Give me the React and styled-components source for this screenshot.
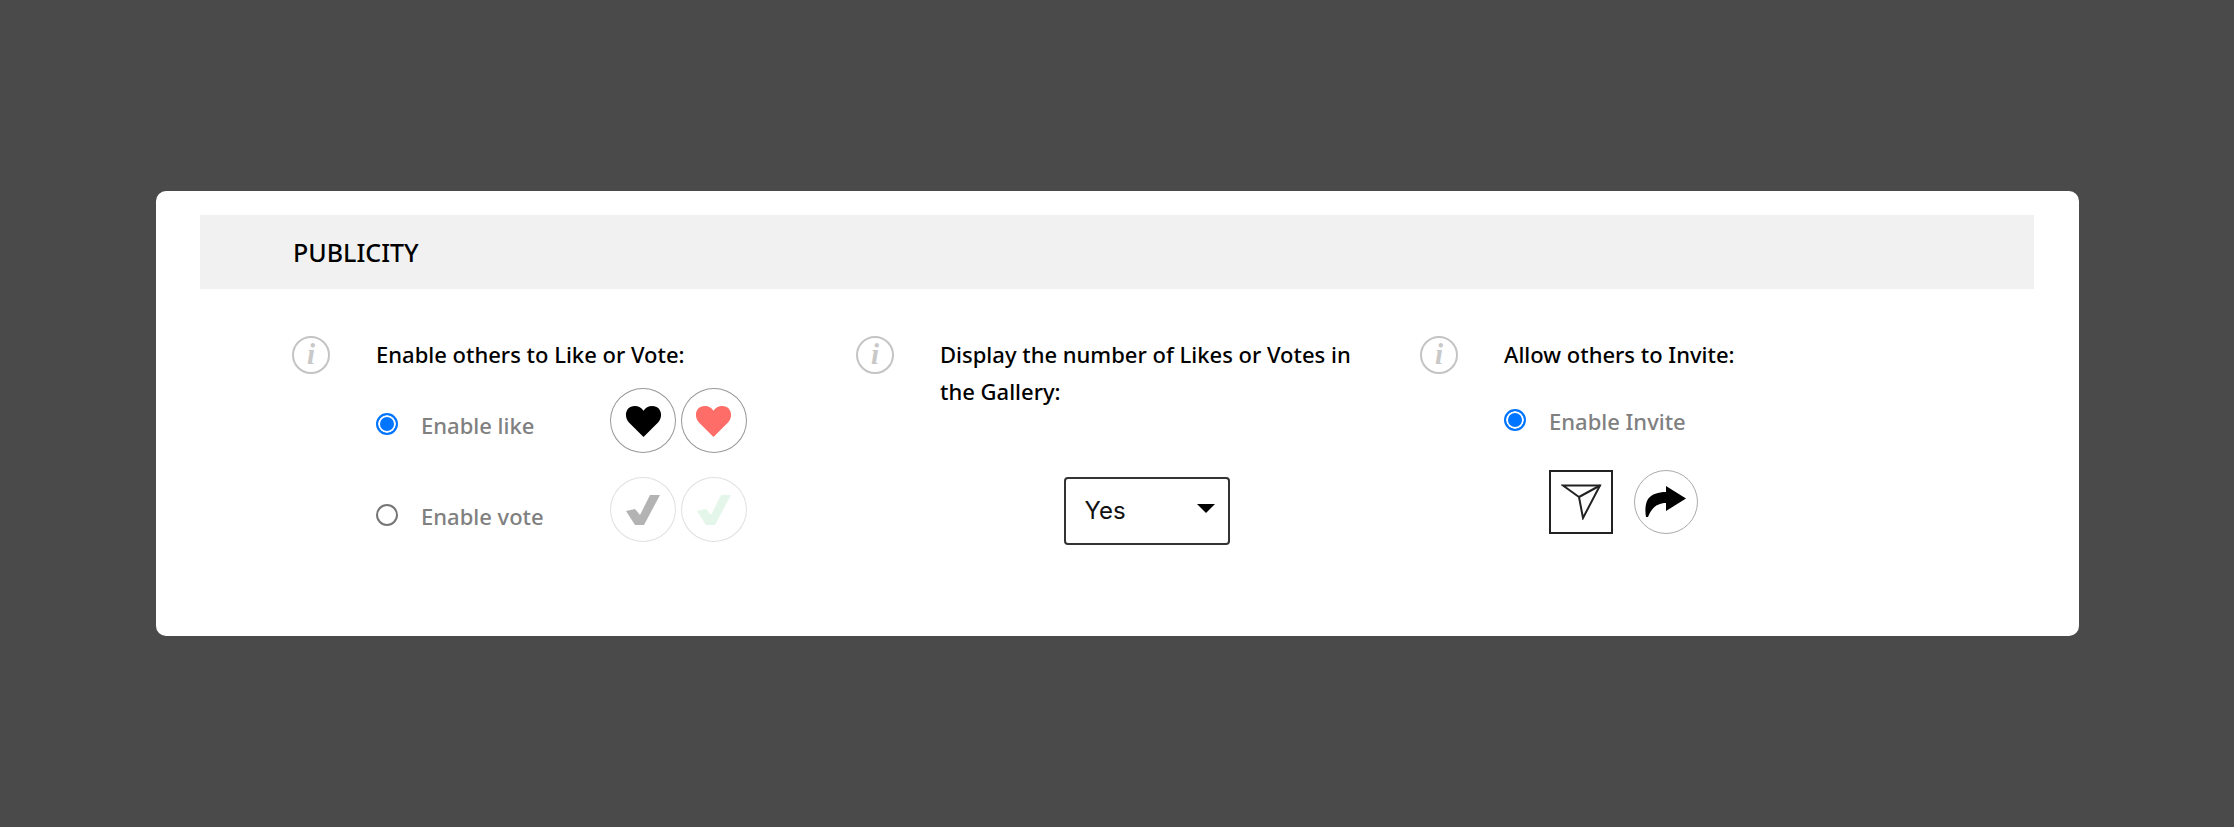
import React from "react";
import styled, { createGlobalStyle } from "styled-components";

const GlobalStyle = createGlobalStyle`
    html, body {
        margin: 0;
        height: 100%;
        background: #4a4a4a;
    }
    body {
        font-family: 'Noto Sans', 'Open Sans', sans-serif;
    }
`;

const Page = styled.div`
    padding: 191px 155px 0 155.5px;
    height: 827px;
    box-sizing: border-box;
`;

const Card = styled.section`
    box-sizing: border-box;
    width: 1923.5px;
    height: 445px;
    padding: 24px 45px 0 44.5px;
    background: #fff;
    border-radius: 10px;
`;

const SectionHeader = styled.h2`
    box-sizing: border-box;
    height: 74px;
    margin: 0;
    padding-left: 93px;
    background: #f1f1f1;
    color: #000;
    font-size: 25px;
    font-weight: 500;
    line-height: 74px;
`;

const Columns = styled.div`
    display: grid;
    grid-template-columns: repeat(3, 564px);
    padding: 47px 0 0 92px;
`;

const Column = styled.div`
    display: flex;
    align-items: flex-start;
`;

const InfoIcon = styled.span`
    flex: none;
    box-sizing: border-box;
    width: 38px;
    height: 38px;
    margin-right: 46px;
    border: 2px solid #c4c4c4;
    border-radius: 50%;
    color: #c8c8c8;
    font-family: 'Liberation Serif', serif;
    font-style: italic;
    font-weight: 700;
    font-size: 29px;
    line-height: 33px;
    text-align: center;
`;

const Content = styled.div`
    flex: 1;
    min-width: 0;
`;

const Title = styled.div`
    width: 425px;
    color: #000;
    font-size: 22px;
    font-weight: 500;
    line-height: 37px;
`;

const OptionRow = styled.div`
    display: flex;
    align-items: flex-start;
    margin-top: ${props => props.$top}px;
`;

const Choice = styled.label`
    display: flex;
    align-items: flex-start;
    width: 234px;
    padding-top: ${props => props.$offset}px;
`;

const Radio = styled.input.attrs({ type: "radio", readOnly: true })`
    appearance: none;
    flex: none;
    box-sizing: border-box;
    width: 22px;
    height: 22px;
    margin: 0 23px 0 0;
    border: 2px solid ${props => props.checked ? "#0075ff" : "#767676"};
    border-radius: 50%;
    background: ${props => props.checked ? "#0075ff" : "#fff"};
    box-shadow: ${props => props.checked ? "inset 0 0 0 2px #fff" : "none"};
`;

const ChoiceLabel = styled.span`
    margin-top: -3px;
    color: #808080;
    font-size: 22px;
    font-weight: 500;
    line-height: 30px;
`;

const IconCircle = styled.span`
    display: flex;
    align-items: center;
    justify-content: center;
    flex: none;
    box-sizing: border-box;
    width: 66px;
    height: 65px;
    margin-right: 4.5px;
    border: 1.5px solid ${props => props.$faded ? "#e0e0e0" : "#989898"};
    border-radius: 50%;
`;

const SelectBox = styled.div`
    display: flex;
    align-items: center;
    justify-content: space-between;
    box-sizing: border-box;
    width: 166px;
    height: 68px;
    margin: 67px 0 0 123.5px;
    padding: 0 13px 2px 19px;
    border: 2px solid #333;
    border-radius: 4px;
    color: #111;
    font-family: 'Inter', sans-serif;
    font-size: 24px;
`;

const Caret = styled.span`
    width: 0;
    height: 0;
    margin-top: -3px;
    border-left: 9px solid transparent;
    border-right: 9px solid transparent;
    border-top: 9px solid #000;
`;

const InviteIcons = styled.div`
    display: flex;
    gap: 21px;
    margin: 34px 0 0 45px;
`;

const SquareIcon = styled.span`
    display: flex;
    align-items: center;
    justify-content: center;
    box-sizing: border-box;
    width: 64px;
    height: 64px;
    border: 2px solid #222;
`;

const RoundIcon = styled(SquareIcon)`
    border: 1.5px solid #aaa;
    border-radius: 50%;
`;

const Heart = ({ color }) => (
    <svg width="37" height="32" viewBox="0 0 38 33">
        <path
            fill={color}
            d="M19 33 L4 18 C-2 11 1 1 10 1 C14 1 17 3 19 6 C21 3 24 1 28 1 C37 1 40 11 34 18 Z"
        />
    </svg>
);

const Check = ({ color }) => (
    <svg width="34" height="32" viewBox="0 0 34 32">
        <path fill={color} d="M0 17 L9 15 L14 21 L24 1 L34 1 L18 31 L9 31 Z" />
    </svg>
);

const PaperPlane = () => (
    <svg width="41" height="36" viewBox="0 0 41 36" fill="none" stroke="#222" strokeWidth="2">
        <path d="M2 1.5 H39 L22 34 L18 13 Z" />
        <path d="M18 13 L39 1.5" />
    </svg>
);

const ShareArrow = () => (
    <svg width="42" height="32" viewBox="0 0 42 32">
        <path
            fill="#000"
            d="M21 0 L41 12.5 L21 25 V17 C13 17 7 21 3 31 L1 31 C0 25 0 18 3 13 C7 8 13 6 21 6 Z"
        />
    </svg>
);

const App = () => {
    return (
        <Page>
            <GlobalStyle />
            <Card>
                <SectionHeader>PUBLICITY</SectionHeader>
                <Columns>
                    <Column>
                        <InfoIcon>i</InfoIcon>
                        <Content>
                            <Title>Enable others to Like or Vote:</Title>
                            <OptionRow $top={15}>
                                <Choice $offset={25}>
                                    <Radio name="mode" checked />
                                    <ChoiceLabel>Enable like</ChoiceLabel>
                                </Choice>
                                <IconCircle><Heart color="#000" /></IconCircle>
                                <IconCircle><Heart color="#ff6d68" /></IconCircle>
                            </OptionRow>
                            <OptionRow $top={24}>
                                <Choice $offset={27}>
                                    <Radio name="mode" checked={false} />
                                    <ChoiceLabel>Enable vote</ChoiceLabel>
                                </Choice>
                                <IconCircle $faded><Check color="#b3b3b3" /></IconCircle>
                                <IconCircle $faded><Check color="#e3f6e9" /></IconCircle>
                            </OptionRow>
                        </Content>
                    </Column>
                    <Column>
                        <InfoIcon>i</InfoIcon>
                        <Content>
                            <Title>Display the number of Likes or Votes in the Gallery:</Title>
                            <SelectBox>
                                Yes
                                <Caret />
                            </SelectBox>
                        </Content>
                    </Column>
                    <Column>
                        <InfoIcon>i</InfoIcon>
                        <Content>
                            <Title>Allow others to Invite:</Title>
                            <OptionRow $top={36}>
                                <Choice $offset={0}>
                                    <Radio name="invite" checked />
                                    <ChoiceLabel>Enable Invite</ChoiceLabel>
                                </Choice>
                            </OptionRow>
                            <InviteIcons>
                                <SquareIcon><PaperPlane /></SquareIcon>
                                <RoundIcon><ShareArrow /></RoundIcon>
                            </InviteIcons>
                        </Content>
                    </Column>
                </Columns>
            </Card>
        </Page>
    );
};

export default App;
